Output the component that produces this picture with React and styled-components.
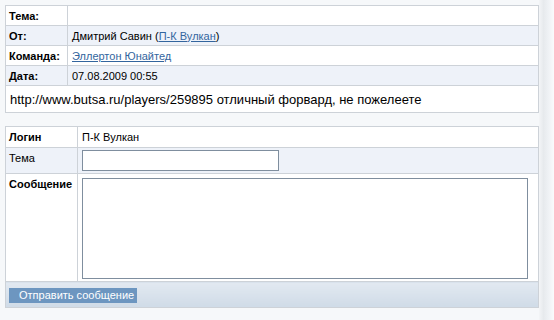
import React from 'react';
import styled, { createGlobalStyle } from 'styled-components';

const GlobalStyle = createGlobalStyle`
  html, body {
    margin: 0;
    padding: 0;
    background: #f6f8fa;
  }
  body {
    font-family: Tahoma, "Liberation Sans", "DejaVu Sans", sans-serif;
    font-size: 11px;
    color: #000;
  }
`;

const Page = styled.div`
  display: flex;
  width: 554px;
  height: 320px;
  overflow: hidden;
`;

const Content = styled.div`
  display: flex;
  flex-direction: column;
  gap: 13px;
  padding: 5px 0 0 5px;
  width: 534px;
`;

const SideStrip = styled.div`
  width: 15px;
  background: linear-gradient(to right, #f3f5f7 0%, #e7eaed 30%, #eef1f4 60%, #fafbfc 100%);
`;

const Table = styled.table`
  width: 534px;
  border-collapse: collapse;
  background: #fff;
  border: 1px solid #cdd2d8;
`;

const Row = styled.tr`
  background: ${p => (p.alt ? '#eef2f9' : '#ffffff')};
`;

const Label = styled.td`
  width: ${p => p.w}px;
  box-sizing: border-box;
  height: ${p => p.h}px;
  padding: ${p => (p.top ? '4px 3px 0' : '0 3px')};
  vertical-align: ${p => (p.top ? 'top' : 'middle')};
  font-weight: ${p => (p.plain ? 'normal' : 'bold')};
  border: 1px solid #cdd2d8;
  white-space: nowrap;
`;

const Value = styled.td`
  padding: ${p => p.pad || '0 4px'};
  vertical-align: ${p => (p.pad ? 'top' : 'middle')};
  border: 1px solid #cdd2d8;
`;

const Body = styled.td`
  height: 26px;
  padding: 0 4px;
  font-size: 13px;
  border: 1px solid #cdd2d8;
`;

const Link = styled.a`
  color: #33659e;
  text-decoration: underline;
`;

const TextInput = styled.input`
  display: block;
  box-sizing: border-box;
  width: 197px;
  height: 21px;
  border: 1px solid #7f8e9e;
  background: #fff;
  margin: 0;
`;

const TextArea = styled.textarea`
  display: block;
  box-sizing: border-box;
  width: 446px;
  height: 101px;
  border: 1px solid #7f8e9e;
  resize: none;
  margin: 0;
  background: #fff;
`;

const ButtonBar = styled.td`
  height: 20px;
  padding: 3px 3px 2px;
  background: linear-gradient(to bottom, #e2e9f1, #cfdbe7);
  border: 1px solid #cdd2d8;
`;

const SendButton = styled.button`
  display: block;
  height: 15px;
  width: 128px;
  padding: 0 0 0 10px;
  margin: 0;
  border: none;
  background: #6d96c0;
  color: #fff;
  font-family: Tahoma, "Liberation Sans", "DejaVu Sans", sans-serif;
  font-size: 11px;
  text-align: left;
  line-height: 15px;
`;

export default function App() {
  return (
    <Page>
      <GlobalStyle />
      <Content>
        <Table>
          <tbody>
            <Row>
              <Label w={62} h={20}>Тема:</Label>
              <Value></Value>
            </Row>
            <Row alt>
              <Label w={62} h={20}>От:</Label>
              <Value>
                Дмитрий Савин (<Link href="#">П-К Вулкан</Link>)
              </Value>
            </Row>
            <Row>
              <Label w={62} h={20}>Команда:</Label>
              <Value>
                <Link href="#">Эллертон Юнайтед</Link>
              </Value>
            </Row>
            <Row alt>
              <Label w={62} h={20}>Дата:</Label>
              <Value>07.08.2009 00:55</Value>
            </Row>
            <Row>
              <Body colSpan={2}>
                http://www.butsa.ru/players/259895 отличный форвард, не пожелеете
              </Body>
            </Row>
          </tbody>
        </Table>

        <Table>
          <tbody>
            <Row>
              <Label w={72} h={21}>Логин</Label>
              <Value>П-К Вулкан</Value>
            </Row>
            <Row alt>
              <Label w={72} h={26} plain top>Тема</Label>
              <Value pad="2px 4px 2px">
                <TextInput type="text" />
              </Value>
            </Row>
            <Row>
              <Label w={72} h={108} top>Сообщение</Label>
              <Value pad="4px 4px 2px">
                <TextArea />
              </Value>
            </Row>
            <tr>
              <ButtonBar colSpan={2}>
                <SendButton type="button">Отправить сообщение</SendButton>
              </ButtonBar>
            </tr>
          </tbody>
        </Table>
      </Content>
      <SideStrip />
    </Page>
  );
}
